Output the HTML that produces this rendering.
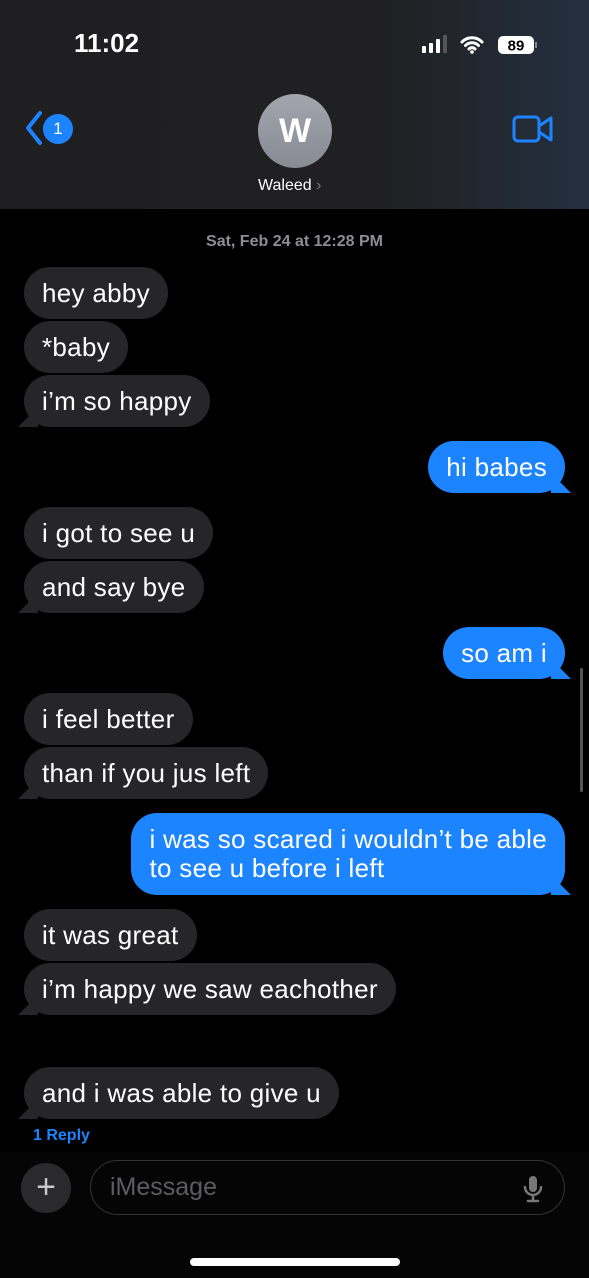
<!DOCTYPE html>
<html><head><meta charset="utf-8"><style>
*{margin:0;padding:0;box-sizing:border-box}
body{width:589px;height:1278px;background:#000;position:relative;overflow:hidden;font-family:"Liberation Sans",Arial,sans-serif;color:#fff}
.hdr{position:absolute;left:0;top:0;width:589px;height:209px;background:linear-gradient(90deg,#1f1f21 0%,#202022 65%,#24303f 100%)}
.b{position:absolute;height:52px;border-radius:26px;background:#262628;font-size:26px;letter-spacing:0.3px;line-height:52px;padding:0 18px;white-space:nowrap}
.u{background:#1d84ff}
.tl::before{content:"";position:absolute;left:-6px;bottom:0;width:20px;height:20px;background:#262628;clip-path:polygon(0 100%,100% 0,100% 100%)}
.tr::before{content:"";position:absolute;right:-6px;bottom:0;width:20px;height:20px;background:#1d84ff;clip-path:polygon(100% 100%,0 0,0 100%)}
</style></head><body>
<div class="hdr"></div>
<div style="position:absolute;left:74px;top:28px;font-size:26px;font-weight:bold">11:02</div>
<svg style="position:absolute;left:422px;top:34px" width="130" height="22">
<rect x="0" y="12" width="4" height="7" rx="1" fill="#fff"/><rect x="7" y="9" width="4" height="10" rx="1" fill="#fff"/><rect x="14" y="5" width="4" height="14" rx="1" fill="#fff"/><rect x="21" y="1" width="4" height="18" rx="1" fill="#555"/>
<path d="M40 8a14 14 0 0 1 20 0M43.5 11.5a9 9 0 0 1 13 0M47 15a4 4 0 0 1 6 0" stroke="#fff" stroke-width="3" fill="none" stroke-linecap="round"/><circle cx="50" cy="18" r="1.8" fill="#fff"/>
<rect x="76" y="2" width="36" height="18" rx="5" fill="#fff"/><rect x="113" y="8" width="2" height="6" fill="#888"/>
<text x="94" y="16.5" font-size="15" font-weight="bold" text-anchor="middle" fill="#000" font-family="Liberation Sans">89</text></svg>
<svg style="position:absolute;left:24px;top:110px" width="20" height="36"><path d="M16 3L4 18l12 15" stroke="#1d84ff" stroke-width="4" fill="none" stroke-linecap="round" stroke-linejoin="round"/></svg>
<div style="position:absolute;left:43px;top:114px;width:30px;height:30px;border-radius:50%;background:#1d84ff;font-size:17px;text-align:center;line-height:30px">1</div>
<div style="position:absolute;left:258px;top:94px;width:74px;height:74px;border-radius:50%;background:linear-gradient(#a4a6ae,#878a93);font-size:34px;font-weight:bold;text-align:center;line-height:74px">W</div>
<div style="position:absolute;left:258px;top:177px;font-size:16px">Waleed <span style="color:#777">›</span></div>
<svg style="position:absolute;left:512px;top:115px" width="42" height="28"><rect x="2" y="2" width="25" height="24" rx="4" stroke="#1d84ff" stroke-width="3" fill="none"/><path d="M27 11l12-8v22l-12-8" stroke="#1d84ff" stroke-width="3" fill="none" stroke-linejoin="round"/></svg>
<div style="position:absolute;left:0;width:589px;top:233px;text-align:center;font-size:16px;font-weight:bold;color:#8d8d92">Sat, Feb 24 at 12:28 PM</div>
<div class="b" style="left:24px;top:267px">hey abby</div>
<div class="b" style="left:24px;top:321px">*baby</div>
<div class="b tl" style="left:24px;top:375px">i’m so happy</div>
<div class="b u tr" style="right:24px;top:441px">hi babes</div>
<div class="b" style="left:24px;top:507px">i got to see u</div>
<div class="b tl" style="left:24px;top:561px">and say bye</div>
<div class="b u tr" style="right:24px;top:627px">so am i</div>
<div class="b" style="left:24px;top:693px">i feel better</div>
<div class="b tl" style="left:24px;top:747px">than if you jus left</div>
<div class="b u tr" style="right:24px;top:813px;height:82px;line-height:29px;padding-top:12px">i was so scared i wouldn’t be able<br>to see u before i left</div>
<div class="b" style="left:24px;top:909px">it was great</div>
<div class="b tl" style="left:24px;top:963px">i’m happy we saw eachother</div>
<div class="b tl" style="left:24px;top:1067px">and i was able to give u</div>
<div style="position:absolute;left:33px;top:1127px;font-size:16px;font-weight:bold;color:#1d84ff">1 Reply</div>
<div style="position:absolute;left:0;top:1152px;width:589px;height:126px;background:#050505"></div>
<div style="position:absolute;left:21px;top:1163px;width:50px;height:50px;border-radius:50%;background:#2a2a2c;font-size:34px;text-align:center;line-height:48px;color:#c8c8c8">+</div>
<div style="position:absolute;left:90px;top:1160px;width:475px;height:55px;border-radius:28px;border:1px solid #333;font-size:25px;line-height:53px;padding-left:19px;color:#5d5d61">iMessage</div>
<svg style="position:absolute;left:520px;top:1174px" width="26" height="30"><rect x="9" y="2" width="8" height="16" rx="4" fill="#777"/><path d="M5 13a8 8 0 0 0 16 0M13 21v5M8 27h10" stroke="#777" stroke-width="2.5" fill="none" stroke-linecap="round"/></svg>
<div style="position:absolute;left:190px;top:1258px;width:210px;height:8px;border-radius:4px;background:#fff"></div>
<div style="position:absolute;left:580px;top:668px;width:3px;height:124px;border-radius:2px;background:#555"></div>
</body></html>
